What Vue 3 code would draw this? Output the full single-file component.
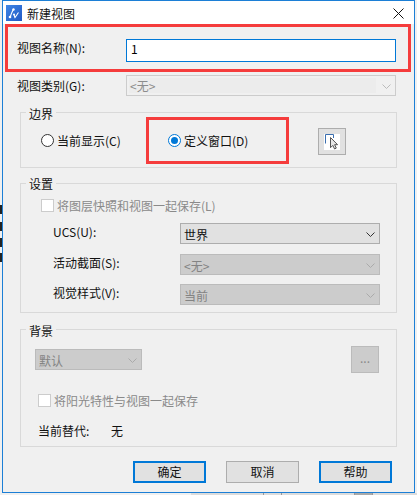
<script setup>
const formRows = [
  { label: 'UCS(U):', value: '世界', live: true, cls: 'r1' },
  { label: '活动截面(S):', value: '<无>', live: false, cls: 'r2' },
  { label: '视觉样式(V):', value: '当前', live: false, cls: 'r3' },
]
const marks = [205, 222, 238, 253]
</script>

<template>
  <div class="page">
    <div class="left-marks">
      <i v-for="m in marks" :key="m" :style="{ top: m + 'px' }"></i>
    </div>
    <div class="win">
      <header class="title">
        <svg class="logo" width="16" height="16" viewBox="0 0 16 16">
          <defs>
            <linearGradient id="lg" x1="0" y1="0" x2="1" y2="1">
              <stop offset="0" stop-color="#3f86e6" />
              <stop offset="1" stop-color="#2159c4" />
            </linearGradient>
          </defs>
          <rect width="16" height="16" fill="url(#lg)" />
          <path d="M4 12.5C5 9 6 7 7.5 4M8 9.5c.5 1 .5 2 1 3 1-1 2-3 3.5-5" fill="none" stroke="#fff" stroke-width="1.1" />
          <circle cx="4" cy="12" r="1.3" fill="#fff" />
          <circle cx="7.5" cy="4.5" r="1.2" fill="#fff" />
          <circle cx="8" cy="9.5" r="1" fill="#fff" />
        </svg>
        <span class="title-text">新建视图</span>
        <svg class="close" width="11" height="11" viewBox="0 0 11 11">
          <path d="M.5.5l10 10M10.5.5l-10 10" stroke="#111" stroke-width="1" fill="none" />
        </svg>
      </header>

      <div class="name-row">
        <span class="lbl">视图名称(N):</span>
        <div class="input">1</div>
      </div>
      <div class="type-row">
        <span class="lbl">视图类别(G):</span>
        <div class="type-select">
          <span class="type-inner">&lt;无&gt;</span>
          <svg class="chev" width="9" height="5" viewBox="0 0 9 5"><path d="M.5.5l4 4 4-4" fill="none" stroke="#bbb" /></svg>
        </div>
      </div>

      <section class="group bounds">
        <span class="legend">边界</span>
        <label class="radio-item first"><span class="radio"></span>当前显示(C)</label>
        <label class="radio-item second"><span class="radio on"><i></i></span>定义窗口(D)</label>
        <button class="pick">
          <svg width="16" height="16" viewBox="0 0 16 16">
            <rect width="16" height="16" fill="#fff" />
            <path d="M1.5 9.5V.5H9.5V4" fill="none" stroke="#3b6fb0" stroke-width="1" />
            <path d="M6.5 3.5v10.2l2.3-2.3 1.8 3.6 1.7-.9-1.7-3.4h3z" fill="#e8e8e8" stroke="#555" stroke-width="1" />
          </svg>
        </button>
      </section>

      <section class="group settings">
        <span class="legend">设置</span>
        <label class="check-item muted top-check"><span class="check"></span>将图层快照和视图一起保存(L)</label>
        <div v-for="row in formRows" :key="row.label" class="form-row" :class="row.cls">
          <span class="form-label">{{ row.label }}</span>
          <div class="sel" :class="row.live ? 'live' : 'off'">
            {{ row.value }}
            <svg class="chev" width="9" height="5" viewBox="0 0 9 5"><path d="M.5.5l4 4 4-4" fill="none" :stroke="row.live ? '#333' : '#aaa'" /></svg>
          </div>
        </div>
      </section>

      <section class="group background">
        <span class="legend">背景</span>
        <div class="bg-top">
          <div class="sel off small">默认<svg class="chev" width="9" height="5" viewBox="0 0 9 5"><path d="M.5.5l4 4 4-4" fill="none" stroke="#aaa" /></svg></div>
          <button class="dots">...</button>
        </div>
        <label class="check-item muted sun"><span class="check"></span>将阳光特性与视图一起保存</label>
        <div class="override"><span class="ov-label">当前替代:</span><span>无</span></div>
      </section>

      <div class="actions">
        <button class="btn primary">确定</button>
        <button class="btn">取消</button>
        <button class="btn primary">帮助</button>
      </div>

      <div class="red red-a"></div>
      <div class="red red-b"></div>
    </div>
    <div class="strip">
      <i class="c1"></i><i class="c2"></i><i class="c3"></i><i class="c4"></i>
    </div>
  </div>
</template>

<style>
html, body { margin: 0; background: #f0f0f0; }
</style>

<style scoped>
.page {
  position: relative;
  width: 417px;
  height: 495px;
  overflow: hidden;
  padding-left: 2px;
  box-sizing: border-box;
  background: #f0f0f0;
  font-family: "Noto Sans CJK SC", "Noto Sans", sans-serif;
  font-size: 12px;
  color: #111;
}
.left-marks i {
  position: absolute;
  left: 0;
  width: 2px;
  height: 9px;
  background: #222;
}
.win {
  position: relative;
  width: 413px;
  height: 493px;
  box-sizing: border-box;
  border: 1px solid #1c7fd6;
  background: #f0f0f0;
}
.title {
  height: 23px;
  background: #fff;
  display: flex;
  align-items: center;
  padding: 1px 10px 0 3px;
  box-sizing: border-box;
}
.logo { flex: none; }
.title-text { margin-left: 5px; line-height: 23px; }
.close { margin-left: auto; }

.lbl { width: 109px; margin-left: 14px; flex: none; color: #111; }
.name-row {
  height: 48px;
  padding-top: 15px;
  box-sizing: border-box;
  display: flex;
  align-items: flex-start;
}
.name-row .lbl { line-height: 18px; }
.input {
  width: 270px;
  height: 23px;
  box-sizing: border-box;
  border: 1px solid #0078d7;
  background: #fff;
  padding-left: 4px;
  line-height: 18px;
  color: #000;
}
.type-row { height: 21px; margin-top: 3px; display: flex; align-items: center; }
.type-select {
  position: relative;
  width: 270px;
  height: 21px;
  box-sizing: border-box;
  border: 1px solid #ccc;
  padding: 2px;
}
.type-inner {
  display: block;
  width: 246px;
  height: 15px;
  line-height: 15px;
  background: #ececec;
  color: #8c8c8c;
  padding-left: 1px;
}
.type-select .chev { position: absolute; right: 4px; top: 8px; }

.group {
  position: relative;
  width: 377px;
  margin-left: 17px;
  box-sizing: border-box;
  border: 1px solid #d9d9d9;
}
.legend {
  position: absolute;
  left: 5px;
  top: -6px;
  padding: 0 3px;
  line-height: 14px;
  background: #f0f0f0;
  color: #111;
}
.bounds {
  margin-top: 16px;
  height: 56px;
  padding: 3px 0 0 20px;
  display: flex;
  align-items: center;
}
.radio-item { display: flex; align-items: center; gap: 3px; color: #111; line-height: 16px; margin-bottom: 2px; }
.radio-item.first { width: 127px; }
.radio-item.second { width: 150px; }
.radio {
  width: 13px;
  height: 13px;
  box-sizing: border-box;
  border: 1px solid #333;
  border-radius: 50%;
  background: #fff;
  display: flex;
  align-items: center;
  justify-content: center;
}
.radio.on { border-color: #0078d7; }
.radio i { width: 7px; height: 7px; border-radius: 50%; background: #0078d7; }
.pick {
  width: 28px;
  height: 27px;
  padding: 0;
  border: 1px solid #adadad;
  background: #e1e1e1;
  display: flex;
  align-items: center;
  justify-content: center;
}

.settings {
  margin-top: 15px;
  height: 130px;
  padding-left: 20px;
}
.settings .legend { top: -7px; }
.check-item { display: flex; align-items: center; gap: 3px; height: 13px; line-height: 16px; }
.muted { color: #8a8a8a; }
.check {
  width: 13px;
  height: 13px;
  box-sizing: border-box;
  border: 1px solid #ccc;
  background: #fff;
  flex: none;
}
.top-check { margin-top: 15px; }
.form-row {
  display: flex;
  align-items: center;
  margin-left: 12px;
  height: 21px;
  color: #111;
}
.form-label { width: 127px; flex: none; margin-bottom: 4px; }
.r1 { margin-top: 11px; }
.r2 { margin-top: 10px; }
.r3 { margin-top: 9px; }
.sel {
  position: relative;
  width: 200px;
  height: 21px;
  box-sizing: border-box;
  border: 1px solid #adadad;
  padding-left: 3px;
  line-height: 21px;
}
.sel .chev { position: absolute; right: 4px; top: 8px; }
.sel.live { background: #e1e1e1; color: #111; }
.sel.off { background: #cccccc; border-color: #bbb; color: #838383; }

.background {
  margin-top: 16px;
  height: 118px;
  padding-left: 14px;
}
.bg-top { display: flex; align-items: center; height: 27px; margin-top: 16px; }
.sel.small { width: 107px; flex: none; }
.dots {
  margin-left: 209px;
  width: 28px;
  height: 27px;
  padding: 0 0 4px;
  border: 1px solid #bbb;
  background: #ccc;
  color: #8a8a8a;
  font-family: inherit;
  font-size: 12px;
  line-height: 12px;
}
.sun { margin-left: 3px; margin-top: 21px; }
.override { margin-left: 3px; margin-top: 15px; line-height: 18px; color: #111; display: flex; }
.ov-label { width: 73px; }

.actions {
  display: flex;
  gap: 20px;
  margin-top: 14px;
  margin-left: 130px;
}
.btn {
  width: 73px;
  height: 22px;
  padding: 0;
  box-sizing: border-box;
  border: 1px solid #adadad;
  background: #e1e1e1;
  color: #111;
  font-family: inherit;
  font-size: 12px;
  line-height: 18px;
}
.btn.primary { border: 2px solid #0078d7; }

.red {
  position: absolute;
  box-sizing: border-box;
  border: 3px solid #f53c3c;
  pointer-events: none;
}
.red-a { left: 2px; top: 23px; width: 406px; height: 48px; }
.red-b { left: 143px; top: 116px; width: 143px; height: 47px; }

.strip {
  height: 2px;
  margin-left: 189px;
  display: flex;
  background: #dcdcdc;
}
.strip i { display: block; height: 2px; border-right: 1px solid #999; box-sizing: border-box; }
.c1 { width: 73px; }
.c2 { width: 18px; }
.c3 { width: 73px; }
.c4 { width: 18px; background: #aaa; }
</style>
